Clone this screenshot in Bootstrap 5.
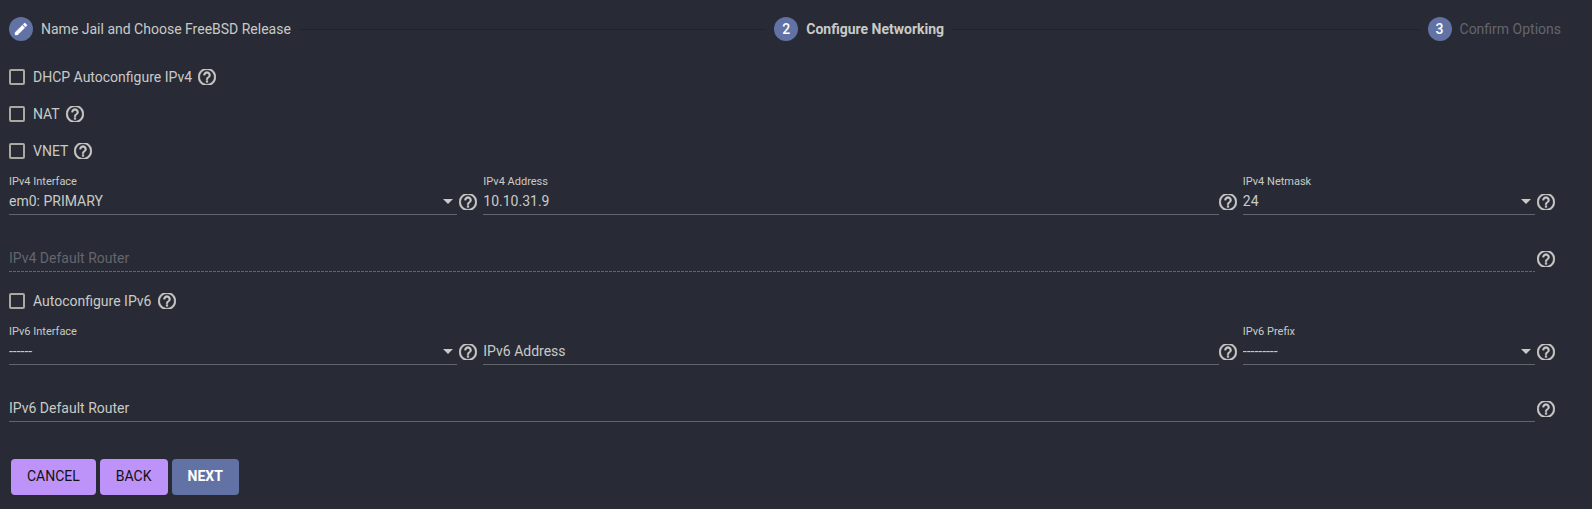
<!DOCTYPE html>
<html lang="en">
<head>
<meta charset="utf-8">
<meta name="viewport" content="width=device-width, initial-scale=1">
<title>Configure Networking</title>
<link href="https://cdn.jsdelivr.net/npm/bootstrap@5.3.0/dist/css/bootstrap.min.css" rel="stylesheet">
<style>
  :root { --fg: #c9cac6; --muted: #64666c; --line: #63656c; --accent: #6272a4; }
  body { background: #282a36; color: var(--fg); font-family: Roboto, sans-serif; font-size: 14px; line-height: 20px; }
  .wizard { padding: 0 31px 14px 9px; }
  .stepper { padding: 17px 0 18px; }
  .step-dot { width: 24px; height: 24px; background: var(--accent); color: #fff; font-weight: 500; }
  .step-line { height: 1px; background: #20222d; }
  .step-todo { color: var(--muted); }
  .tick-row { padding: 10px 0 11px; line-height: 16px; }
  .tick-row .form-check-input { width: 16px; height: 16px; margin: 0 8px 0 0; border: 2px solid #a9aa9f; border-radius: 2px; background-color: transparent; }
  .tick-row .form-check-input:checked { background-color: var(--accent); }
  .tick-row label { margin-right: 6px; }
  .help-btn { width: 18px; height: 16px; color: var(--fg); }
  .help-btn svg { width: 18px; height: 16px; display: block; }
  .address-grid { display: grid; grid-template-columns: 474fr 759fr 318fr; margin-top: 3px; }
  .router-row { margin: 31px 0 11px 0; }
  .control { padding-right: 6px; gap: 2px; }
  .control-tight { gap: 0; }
  .caption { font-size: 11px; line-height: 18px; height: 16px; }
  .line-input { width: 100%; height: 26px; padding: 0 0 2px; border: 0; border-bottom: 1px solid var(--line); border-radius: 0; background: transparent; color: var(--fg); appearance: none; line-height: 20px; }
  .line-input::placeholder { color: var(--fg); opacity: 1; }
  .line-input:disabled { border-bottom: 0; padding-bottom: 3px; background: repeating-linear-gradient(to right, var(--line) 0 3px, transparent 3px 4px) left bottom / 100% 1px no-repeat; }
  .line-input:disabled::placeholder { color: var(--muted); }
  .line-input option { background: #282a36; }
  .picker::after { content: ""; position: absolute; right: 4px; top: 10px; border: 5px solid transparent; border-top-color: var(--fg); border-bottom: 0; pointer-events: none; }
  .actions { margin: 37px 2px 0; }
  .actions .btn { height: 36px; padding: 0 16px; border: 0; border-radius: 4px; font-size: 14px; line-height: 34px; padding-bottom: 2px; }
  .btn-plain, .btn-plain:hover { background: #bd93f9; color: #111; }
  .btn-main, .btn-main:hover { background: var(--accent); color: #fff; font-weight: 700; }
</style>
</head>
<body>
<svg class="d-none" aria-hidden="true">
  <symbol id="help" viewBox="2 3.1 20 17.8"><path fill="currentColor" stroke="currentColor" stroke-width=".4" d="M11 18h2v-2h-2v2zm1-16C6.48 2 2 6.48 2 12s4.480 10 10 10 10-4.480 10-10S17.520 2 12 2zm0 18c-4.410 0-8-3.590-8-8s3.590-8 8-8 8 3.590 8 8-3.590 8-8 8zm0-14c-2.210 0-4 1.790-4 4h2c0-1.100.9-2 2-2s2 .9 2 2c0 2-3 1.750-3 5h2c0-2.250 3-2.500 3-5 0-2.210-1.790-4-4-4z"/></symbol>
</svg>
<main class="wizard">
  <nav class="stepper d-flex align-items-center gap-2" aria-label="Steps">
    <span class="step-dot rounded-circle d-flex align-items-center justify-content-center"><svg width="16" height="16" viewBox="0 0 24 24" aria-hidden="true"><path fill="#fff" stroke="#fff" stroke-width=".5" d="M3 17.250V21h3.750L17.810 9.940l-3.750-3.750L3 17.250zM20.710 7.040c.39-.39.39-1.020 0-1.410l-2.340-2.340c-.39-.39-1.020-.39-1.410 0l-1.830 1.830 3.750 3.750 1.830-1.830z"/></svg></span>
    <span>Name Jail and Choose FreeBSD Release</span>
    <span class="step-line flex-grow-1"></span>
    <span class="step-dot rounded-circle d-flex align-items-center justify-content-center">2</span>
    <span class="fw-bold" aria-current="step">Configure Networking</span>
    <span class="step-line flex-grow-1"></span>
    <span class="step-dot rounded-circle d-flex align-items-center justify-content-center">3</span>
    <span class="step-todo">Confirm Options</span>
  </nav>
  <form>
    <div class="tick-row d-flex align-items-center"><input class="form-check-input" type="checkbox" id="dhcp"><label for="dhcp">DHCP Autoconfigure IPv4</label><button type="button" class="help-btn btn border-0 p-0" aria-label="Help"><svg><use href="#help"/></svg></button></div>
    <div class="tick-row d-flex align-items-center"><input class="form-check-input" type="checkbox" id="nat"><label for="nat">NAT</label><button type="button" class="help-btn btn border-0 p-0" aria-label="Help"><svg><use href="#help"/></svg></button></div>
    <div class="tick-row d-flex align-items-center"><input class="form-check-input" type="checkbox" id="vnet"><label for="vnet">VNET</label><button type="button" class="help-btn btn border-0 p-0" aria-label="Help"><svg><use href="#help"/></svg></button></div>

    <div class="address-grid">
      <div>
        <label class="caption d-block" for="if4">IPv4 Interface</label>
        <div class="control d-flex align-items-center">
          <div class="picker position-relative flex-grow-1"><select class="line-input d-block" id="if4"><option>em0: PRIMARY</option></select></div>
          <button type="button" class="help-btn btn border-0 p-0" aria-label="Help"><svg><use href="#help"/></svg></button>
        </div>
      </div>
      <div>
        <label class="caption d-block" for="ip4">IPv4 Address</label>
        <div class="control control-tight d-flex align-items-center">
          <input class="line-input" id="ip4" type="text" value="10.10.31.9">
          <button type="button" class="help-btn btn border-0 p-0 flex-shrink-0" aria-label="Help"><svg><use href="#help"/></svg></button>
        </div>
      </div>
      <div>
        <label class="caption d-block" for="mask4">IPv4 Netmask</label>
        <div class="control d-flex align-items-center">
          <div class="picker position-relative flex-grow-1"><select class="line-input d-block" id="mask4"><option>24</option></select></div>
          <button type="button" class="help-btn btn border-0 p-0" aria-label="Help"><svg><use href="#help"/></svg></button>
        </div>
      </div>
    </div>
    <div class="router-row control d-flex align-items-center">
      <input class="line-input" type="text" placeholder="IPv4 Default Router" aria-label="IPv4 Default Router" disabled>
      <button type="button" class="help-btn btn border-0 p-0 flex-shrink-0" aria-label="Help"><svg><use href="#help"/></svg></button>
    </div>

    <div class="tick-row d-flex align-items-center"><input class="form-check-input" type="checkbox" id="auto6"><label for="auto6">Autoconfigure IPv6</label><button type="button" class="help-btn btn border-0 p-0" aria-label="Help"><svg><use href="#help"/></svg></button></div>

    <div class="address-grid align-items-end">
      <div>
        <label class="caption d-block" for="if6">IPv6 Interface</label>
        <div class="control d-flex align-items-center">
          <div class="picker position-relative flex-grow-1"><select class="line-input d-block" id="if6"><option>------</option></select></div>
          <button type="button" class="help-btn btn border-0 p-0" aria-label="Help"><svg><use href="#help"/></svg></button>
        </div>
      </div>
      <div class="control control-tight d-flex align-items-center">
        <input class="line-input" type="text" placeholder="IPv6 Address" aria-label="IPv6 Address">
        <button type="button" class="help-btn btn border-0 p-0 flex-shrink-0" aria-label="Help"><svg><use href="#help"/></svg></button>
      </div>
      <div>
        <label class="caption d-block" for="prefix6">IPv6 Prefix</label>
        <div class="control d-flex align-items-center">
          <div class="picker position-relative flex-grow-1"><select class="line-input d-block" id="prefix6"><option>---------</option></select></div>
          <button type="button" class="help-btn btn border-0 p-0" aria-label="Help"><svg><use href="#help"/></svg></button>
        </div>
      </div>
    </div>
    <div class="router-row control d-flex align-items-center mb-0">
      <input class="line-input" type="text" placeholder="IPv6 Default Router" aria-label="IPv6 Default Router">
      <button type="button" class="help-btn btn border-0 p-0 flex-shrink-0" aria-label="Help"><svg><use href="#help"/></svg></button>
    </div>

    <div class="actions d-flex gap-1">
      <button type="button" class="btn btn-plain">CANCEL</button>
      <button type="button" class="btn btn-plain">BACK</button>
      <button type="button" class="btn btn-main">NEXT</button>
    </div>
  </form>
</main>
<script src="https://cdn.jsdelivr.net/npm/bootstrap@5.3.0/dist/js/bootstrap.bundle.min.js"></script>
</body>
</html>
